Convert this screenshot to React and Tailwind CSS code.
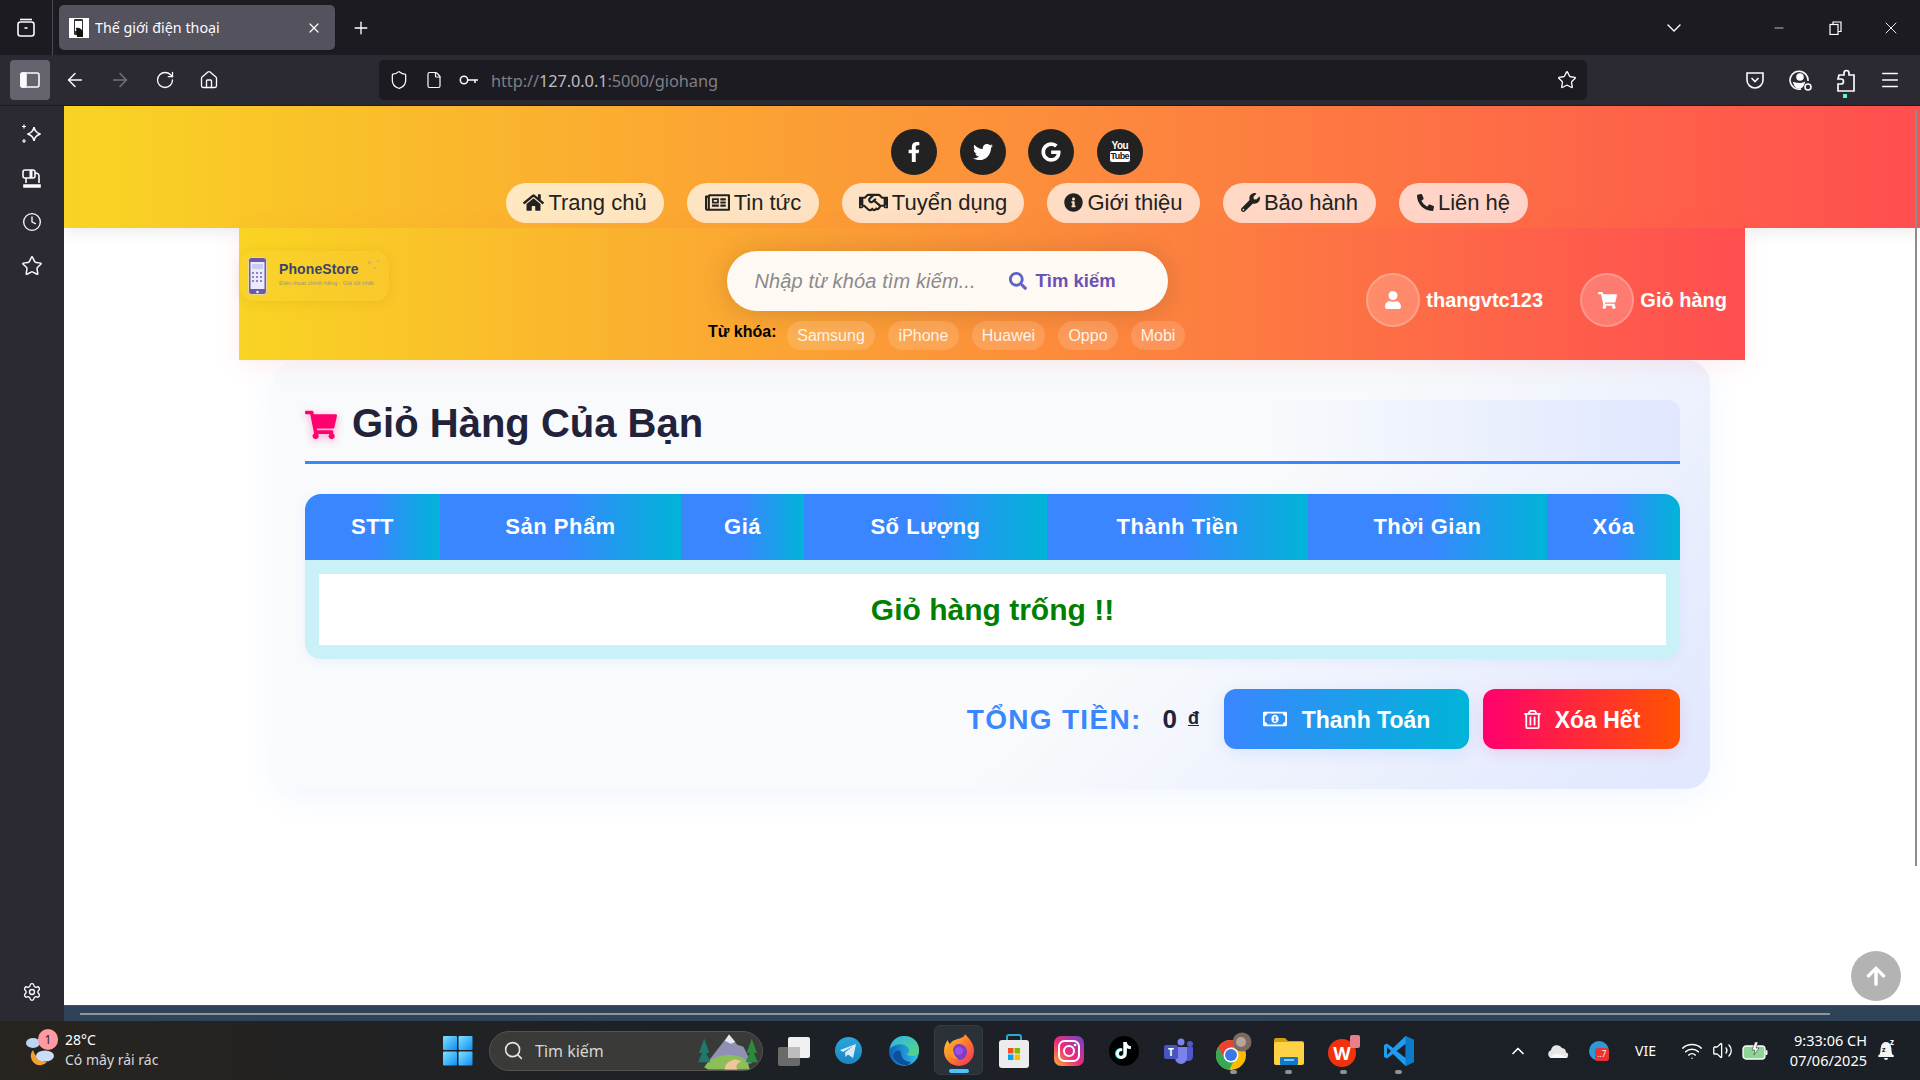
import React from "react";
import { FaHome, FaRegNewspaper, FaRegHandshake, FaInfoCircle, FaWrench, FaPhoneAlt, FaFacebookF, FaTwitter, FaGoogle, FaUser, FaShoppingCart, FaSearch, FaArrowUp, FaRegMoneyBillAlt, FaRegTrashAlt, FaTiktok } from "react-icons/fa";
import { ArrowLeft, ArrowRight, RotateCw, House, Shield, File, Star, Menu, ChevronDown, Minus, X, Plus, Clock, Settings, ChevronUp, Search, Wifi, Volume2 } from "lucide-react";

const nav = [
  [FaHome, "Trang chủ", "w-[158px]", "text-[21px]"],
  [FaRegNewspaper, "Tin tức", "w-[132px]", "text-[25px]"],
  [FaRegHandshake, "Tuyển dụng", "w-[182px]", "text-[29px]"],
  [FaInfoCircle, "Giới thiệu", "w-[153px]", "text-[19px]"],
  [FaWrench, "Bảo hành", "w-[153px]", "text-[19px]"],
  [FaPhoneAlt, "Liên hệ", "w-[129px]", "text-[17px]"],
];
const chips = [["Samsung", "w-[88px]"], ["iPhone", "w-[71px]"], ["Huawei", "w-[73px]"], ["Oppo", "w-[60px]"], ["Mobi", "w-[54px]"]];
const cols = [["STT", "w-[135px]"], ["Sản Phẩm", "w-[241px]"], ["Giá", "w-[123px]"], ["Số Lượng", "w-[243px]"], ["Thành Tiền", "w-[261px]"], ["Thời Gian", "w-[239px]"], ["Xóa", "w-[133px]"]];

function Social({ children }) {
  return <div className="w-[46px] h-[46px] rounded-full bg-[#222222] text-white flex items-center justify-center text-[20px]">{children}</div>;
}

function TabBar() {
  return (
    <div className="h-[55px] bg-[#1c1b22] flex items-center text-white shrink-0">
      <div className="w-[53px] h-full border-r border-[#4a4a50] flex items-center justify-center">
        <svg width="20" height="20" viewBox="0 0 20 20" fill="none" stroke="#fbfbfe" strokeWidth="1.6"><rect x="2" y="4" width="16" height="14" rx="2.5" /><path d="M4 1.5h12" /><path d="M8.5 10h3" /></svg>
      </div>
      <div className="ml-[6px] w-[276px] h-[45px] rounded-[5px] bg-[#53525d] flex items-center pl-[10px] pr-[13px] shadow-sm">
        <div className="w-[20px] h-[20px] bg-white flex items-center justify-center shrink-0">
          <svg width="14" height="18" viewBox="0 0 14 18"><rect x="2" y="0" width="9" height="16" rx="1" fill="#333" /><rect x="3" y="2" width="7" height="10" fill="#fff" /><path d="M4 9c3-1 6 1 7 4v5H5z" fill="#111" /></svg>
        </div>
        <span className="ml-[6px] text-[14.300px] text-[#fbfbfe] font-['Noto_Sans',sans-serif] flex-1 truncate">Thế giới điện thoại</span>
        <X size={16} strokeWidth={1.8} />
      </div>
      <Plus size={20} strokeWidth={1.6} className="ml-[16px]" />
      <div className="flex-1" />
      <ChevronDown size={24} strokeWidth={1.4} className="mr-[86px]" />
      <Minus size={14} strokeWidth={1.2} className="mr-[43px]" />
      <svg width="13" height="14" viewBox="0 0 13 14" fill="none" stroke="#fff" strokeWidth="1.2" className="mr-[39px]"><rect x="1" y="3.5" width="8" height="10" /><path d="M4 3.5V1h8v9.5H9" /></svg>
      <X size={20} strokeWidth={1.1} className="mr-[19px]" />
    </div>
  );
}

function ToolBar() {
  return (
    <div className="h-[51px] bg-[#2b2a33] flex items-start pt-[5px] text-[#fbfbfe] shrink-0 border-b border-[#1c1b22]">
      <div className="ml-[10px] w-[40px] h-[40px] rounded-[4px] bg-[#65646e] flex items-center justify-center">
        <svg width="20" height="16" viewBox="0 0 20 16" fill="none" stroke="#fbfbfe" strokeWidth="1.6"><rect x="1" y="1" width="18" height="14" rx="2" /><rect x="1" y="1" width="5" height="14" rx="1.5" fill="#fbfbfe" /></svg>
      </div>
      <div className="flex items-center h-[40px]">
        <ArrowLeft size={22} strokeWidth={1.6} className="ml-[14px]" />
        <ArrowRight size={22} strokeWidth={1.6} className="ml-[23px] text-[#75747b]" />
        <RotateCw size={20} strokeWidth={1.6} className="ml-[24px]" />
        <House size={20} strokeWidth={1.6} className="ml-[24px]" />
      </div>
      <div className="ml-[160px] w-[1208px] h-[40px] rounded-[5px] bg-[#1c1b22] flex items-center">
        <Shield size={20} strokeWidth={1.5} className="ml-[10px]" />
        <File size={18} strokeWidth={1.6} className="ml-[16px]" />
        <svg width="20" height="12" viewBox="0 0 20 12" fill="none" stroke="#fbfbfe" strokeWidth="1.5" className="ml-[16px]"><circle cx="5" cy="6" r="3.7" /><path d="M9 6h10M16 6v3" /></svg>
        <span className="ml-[12px] mt-[2px] text-[16.400px] text-[#7f7f85] font-['Noto_Sans',sans-serif] tracking-[-0.1px]">http://<span className="text-[#bdbdc1]">127.0.0.1</span>:5000/giohang</span>
        <div className="flex-1" />
        <Star size={20} strokeWidth={1.6} className="mr-[10px]" />
      </div>
      <div className="flex items-center h-[40px] relative">
        <svg width="20" height="20" viewBox="0 0 20 20" fill="none" stroke="#fbfbfe" strokeWidth="1.6" className="ml-[158px]"><path d="M2 3h16v7a8 8 0 0 1-16 0z" /><path d="M6.5 8l3.5 3.5L13.5 8" /></svg>
        <svg width="24" height="24" viewBox="0 0 24 24" fill="none" stroke="#fbfbfe" strokeWidth="1.6" className="ml-[24px]"><path d="M19 13A9 9 0 1 0 12 21" /><circle cx="11" cy="9" r="3" fill="#fbfbfe" /><path d="M5 15c4 1 8 1 10 0-1 3-3 5-5 5-2 0-4-2-5-5z" fill="#fbfbfe" /><circle cx="19" cy="19" r="3" /></svg>
        <svg width="22" height="24" viewBox="0 0 22 24" fill="none" stroke="#fbfbfe" strokeWidth="1.7" className="ml-[22px]"><path d="M4 7h5V5a2.5 2.5 0 0 1 5 0v2h5v16H3v-7h3a2.5 2.5 0 0 0 0-5H3z" /></svg>
        <Menu size={22} strokeWidth={1.6} className="ml-[22px]" />
        <div className="absolute left-[256px] top-[34px] w-[4px] h-[4px] bg-[#54ffbd]" />
      </div>
    </div>
  );
}

function SideBar() {
  return (
    <div className="w-[64px] h-full bg-[#2b2a33] flex flex-col items-center text-[#fbfbfe] pt-[17px] shrink-0">
      <svg width="22" height="22" viewBox="0 0 22 22" fill="none" stroke="#fbfbfe" strokeWidth="1.6"><path d="M13 4c.6 4 2.5 6 6.5 7-4 1-5.900 3-6.500 7-.6-4-2.500-6-6.500-7 4-1 5.900-3 6.500-7z" /><path d="M3 1.500v4M1 3.500h4M3 16v4M1 18h4" strokeWidth="1.200" /></svg>
      <svg width="20" height="20" viewBox="0 0 20 20" fill="none" stroke="#fbfbfe" strokeWidth="1.6" className="mt-[24px]"><rect x="1" y="1" width="12" height="8" rx="2" /><path d="M9 1v8" strokeWidth="3" /><path d="M13 4c3 0 4 1 4 3v7M4 9v5" /><path d="M2 16h16v2H2z" fill="#fbfbfe" /></svg>
      <Clock size={20} strokeWidth={1.6} className="mt-[23px]" />
      <Star size={22} strokeWidth={1.6} className="mt-[23px]" />
      <div className="flex-1" />
      <Settings size={20} strokeWidth={1.6} className="mb-[19px]" />
    </div>
  );
}

function PhoneLogo() {
  return (
    <svg width="19" height="38" viewBox="0 0 19 38" className="shrink-0">
      <rect x="0.500" y="0.500" width="18" height="37" rx="3" fill="#6c5aa8" stroke="#e8d9a8" />
      <rect x="2.500" y="5" width="14" height="27" fill="#eceafc" />
      <rect x="4" y="7" width="11" height="5" fill="#c9cbf1" />
      {[16, 20, 24].map((y) => [5, 9, 13].map((x) => <circle key={x + "-" + y} cx={x} cy={y} r="1.100" fill="#7c6cb8" />))}
      <circle cx="9.500" cy="35" r="1.200" fill="#fff" />
    </svg>
  );
}

function SubHeader() {
  return (
    <div className="mx-auto w-[1506px] h-[132px] flex items-start pl-px bg-[linear-gradient(90deg,#f9d423,#ff4e50)] shadow-[0_4px_24px_rgba(255,78,80,0.1)] relative z-10">
      <div className="mt-[23px] w-[149px] h-[50px] rounded-[14px] bg-[rgba(255,255,255,0.02)] shadow-[0_2px_12px_rgba(120,80,0,0.10)] flex items-center pl-[8px] relative">
        <PhoneLogo />
        <div className="ml-[12px] -mt-[5px] leading-none font-['Liberation_Sans',sans-serif]">
          <div className="text-[14px] font-bold text-[#3a4668] tracking-[0.1px] h-[15px]">PhoneStore</div>
          <div className="text-[6px] text-[#a09878] whitespace-nowrap mt-[3px]">Điện thoại chính hãng - Giá tốt nhất</div>
        </div>
        <div className="absolute left-[128px] top-[10px] w-[3px] h-[3px] rounded-full bg-[#c8b27a]" />
        <div className="absolute left-[137px] top-[9px] w-[2px] h-[2px] rounded-full bg-[#c8b27a]" />
        <div className="absolute left-[134px] top-[16px] w-[2px] h-[2px] rounded-full bg-[#c8b27a]" />
      </div>
      <div className="ml-[319px] w-[477px] mt-[23px] flex flex-col items-center">
        <div className="ml-[1px] w-[441px] h-[60px] rounded-[30px] bg-[#fff9f4] shadow-[0_2px_24px_rgba(80,60,30,0.22)] flex items-center pl-[28px]">
          <input readOnly placeholder="Nhập từ khóa tìm kiếm..." className="w-[236px] italic text-[20px] tracking-[0.12px] bg-transparent outline-none placeholder:text-[#8a8a8a] font-['Liberation_Sans',sans-serif]" />
          <FaSearch className="text-[#5f63c4] text-[18px] ml-[18px]" />
          <span className="ml-[9px] text-[18.500px] font-bold text-[#6a51b3]">Tìm kiếm</span>
        </div>
        <div className="w-full flex items-center mt-[10px]">
          <span className="text-[16px] font-bold text-black w-[79px] -mt-[7px]">Từ khóa:</span>
          <div className="flex gap-[13px]">
            {chips.map(([c, w]) => (
              <span key={c} className={"h-[29px] rounded-full bg-[rgba(255,255,255,0.15)] text-[16px] text-[#fff1e6] flex items-center justify-center " + w}>{c}</span>
            ))}
          </div>
        </div>
      </div>
      <div className="ml-auto mt-[45px] pr-[18px] flex items-center text-white font-bold text-[20px]">
        <div className="w-[54px] h-[54px] rounded-full bg-[rgba(255,255,255,0.2)] border-[2px] border-[rgba(255,255,255,0.22)] flex items-center justify-center text-[18px]"><FaUser /></div>
        <span className="ml-[6px] w-[116px]">thangvtc123</span>
        <div className="ml-[38px] w-[54px] h-[54px] rounded-full bg-[rgba(255,255,255,0.2)] border-[2px] border-[rgba(255,255,255,0.22)] flex items-center justify-center text-[19px]"><FaShoppingCart /></div>
        <span className="ml-[6px]">Giỏ hàng</span>
      </div>
    </div>
  );
}

function Cart() {
  return (
    <div className="ml-[209px] w-[1437px] h-[429px] rounded-[24px] bg-[linear-gradient(135deg,#f8fafc_60%,#e0e7ff_100%)] shadow-[0_8px_32px_rgba(58,134,255,0.08)] pl-[32px] pt-[40px]">
      <div className="w-[1375px] h-[64px] rounded-t-[12px] border-b-[3px] border-[#3a86ff] bg-[linear-gradient(90deg,#f8fafc_70%,#e0e7ff_100%)] flex items-start">
        <FaShoppingCart className="text-[#ff006e] text-[32px] drop-shadow-[0_2px_4px_rgba(255,0,110,0.35)] mt-[9px]" />
        <h1 className="ml-[15px] text-[40px] font-bold text-[#22223b] leading-none mt-[3px]">Giỏ Hàng Của Bạn</h1>
      </div>
      <div className="w-[1375px] mt-[30px] rounded-[16px] overflow-hidden shadow-[0_2px_12px_rgba(58,134,255,0.07)]">
        <table className="w-[1375px] table-fixed border-collapse">
          <thead>
            <tr className="h-[66px]">
              {cols.map(([c, w]) => (
                <th key={c} className={"text-white text-[22px] font-bold tracking-[0.5px] pb-[2px] bg-[linear-gradient(90deg,#3a86ff_50%,#00b4d8)] " + w}>{c}</th>
              ))}
            </tr>
          </thead>
          <tbody>
            <tr>
              <td colSpan={7} className="bg-[#caf0f8] p-[14px]">
                <div className="h-[71px] bg-white flex items-center justify-center text-[30px] font-bold text-[#008000]">Giỏ hàng trống !!</div>
              </td>
            </tr>
          </tbody>
        </table>
      </div>
      <div className="w-[1375px] mt-[30px] flex items-center justify-end">
        <span className="text-[28px] font-bold text-[#3a86ff] tracking-[1.300px] pt-[1px]">TỔNG TIỀN:</span>
        <span className="ml-[21px] text-[26px] font-bold text-[#22223b] pt-[1px]">0</span>
        <span className="ml-[11px] text-[18px] font-bold text-[#22223b] underline -mt-[3px] leading-none">đ</span>
        <button className="ml-[25px] w-[245px] h-[60px] rounded-[12px] bg-[linear-gradient(90deg,#3a86ff,#00b4d8)] text-white text-[23px] font-bold flex items-center justify-center gap-[15px] shadow-[0_4px_16px_rgba(58,134,255,0.12)]">
          <FaRegMoneyBillAlt className="text-[24px]" /><span className="pt-[2px]">Thanh Toán</span>
        </button>
        <button className="ml-[14px] w-[197px] h-[60px] rounded-[12px] bg-[linear-gradient(90deg,#ff006e,#ff5400)] text-white text-[23px] font-bold flex items-center justify-center gap-[13px] shadow-[0_4px_16px_rgba(255,0,110,0.12)]">
          <FaRegTrashAlt className="text-[19px]" /><span className="pt-[2px]">Xóa Hết</span>
        </button>
      </div>
    </div>
  );
}

function Page() {
  return (
    <div className="flex-1 min-w-0 h-full flex flex-col">
      <div className="flex-1 min-h-0 bg-white font-['Liberation_Sans',Arial,sans-serif] relative overflow-hidden">
        <div className="h-[122px] bg-[linear-gradient(90deg,#f9d423,#ff4e50)] shadow-[0_4px_16px_rgba(0,0,0,0.08)] pt-[23px] pl-[50px] flex flex-col items-center relative">
          <div className="flex gap-[22.500px]">
            <Social><FaFacebookF /></Social>
            <Social><FaTwitter /></Social>
            <Social><FaGoogle /></Social>
            <Social>
              <div className="flex flex-col items-center leading-none -mt-[1px]">
                <span className="text-[10px] font-bold tracking-[-0.6px] h-[10px]">You</span>
                <span className="text-[9px] h-[11px] font-bold bg-white text-[#222222] rounded-[2px] px-[1px] tracking-[-0.6px] flex items-center">Tube</span>
              </div>
            </Social>
          </div>
          <div className="flex gap-[23px] mt-[8px]">
            {nav.map(([I, t, w, s]) => (
              <a key={t} className={"h-[40px] pb-[2px] rounded-[20px] bg-[rgba(255,255,255,0.7)] text-[#222222] text-[22px] flex items-center justify-center gap-[4px] " + w}><I className={"shrink-0 " + s} /><span>{t}</span></a>
            ))}
          </div>
        </div>
        <SubHeader />
        <Cart />
        <div className="absolute right-[19px] top-[845px] w-[50px] h-[50px] rounded-full bg-[#b3b3b3] text-white flex items-center justify-center text-[22px]"><FaArrowUp /></div>
        <div className="absolute right-[3px] top-[4px] w-[2px] h-[756px] bg-[#8d8d8d]" />
      </div>
      <div className="h-[16px] bg-[#2f4358] flex items-center shrink-0 border-t border-[#3d5268]">
        <div className="ml-[16px] w-[1750px] h-[2px] bg-[#8f9499]" />
      </div>
    </div>
  );
}

function TIcon({ children, dot }) {
  return (
    <div className="w-[55px] h-[59px] flex items-center justify-center relative shrink-0">
      {children}
      {dot && <div className="absolute left-[24px] top-[49px] w-[7px] h-[4px] rounded-full bg-[#8e9195]" />}
    </div>
  );
}

function TaskBar() {
  return (
    <div className="h-[59px] shrink-0 flex items-center text-white font-['Noto_Sans',sans-serif] bg-[linear-gradient(90deg,#28241f,#1d2126_35%,#1b2026)] relative">
      <div className="w-[65px] h-full relative shrink-0">
        <svg width="34" height="36" viewBox="0 0 34 36" className="absolute left-[24px] top-[11px]">
          <ellipse cx="9" cy="11" rx="7" ry="5" fill="#bcd4f5" />
          <path d="M9 18a9 9 0 0 0 14 12c-6 0-12-5-14-12z" fill="#f0a030" />
          <ellipse cx="21" cy="24" rx="9" ry="5.500" fill="#cbdcf7" />
        </svg>
        <div className="absolute left-[38px] top-[8px] w-[20px] h-[21px] rounded-full bg-[#ff9aa2] text-[#3a1a1a] text-[12px] flex items-center justify-center">1</div>
      </div>
      <div className="w-[378px] text-[14px] leading-[20px] -mt-[2px]">
        <div>28°C</div>
        <div className="text-[#d8d8d8]">Có mây rải rác</div>
      </div>
      <svg width="30" height="30" viewBox="0 0 30 30" className="shrink-0">
        <defs><linearGradient id="wg" x1="0" y1="0" x2="1" y2="1"><stop offset="0" stopColor="#7fe3ff" /><stop offset="1" stopColor="#0f8cf5" /></linearGradient></defs>
        <rect x="0" y="0" width="14" height="14" rx="1" fill="url(#wg)" /><rect x="15.500" y="0" width="14" height="14" rx="1" fill="url(#wg)" /><rect x="0" y="15.500" width="14" height="14" rx="1" fill="url(#wg)" /><rect x="15.500" y="15.500" width="14" height="14" rx="1" fill="url(#wg)" />
      </svg>
      <div className="ml-[16px] w-[274px] h-[40px] rounded-full bg-[#3a3a38] border border-[#54534f] flex items-center pl-[13px] relative shrink-0">
        <Search size={21} strokeWidth={1.8} className="text-[#e4e4e4]" />
        <span className="ml-[11px] text-[16px] text-[#d6d6d6]">Tìm kiếm</span>
        <svg width="62" height="38" viewBox="0 0 60 36" className="absolute right-[2px] top-[0px]">
          <path d="M10 28L30 2l8 10 6 2 8 16z" fill="#8f90b4" /><path d="M26 8l4-6 6 7-4 2z" fill="#e8e8f4" />
          <path d="M6 34c6-14 32-16 42-6l2 8H10z" fill="#8cbf5a" /><path d="M26 36c0-6 4-8 10-10l6 2c-4 2-6 4-4 8z" fill="#f2c49a" />
          <path d="M6 6l5 14H8l4 9H0l4-9H1z" fill="#1f7a6a" /><path d="M52 6l5 14h-3l4 9H46l4-9h-3z" fill="#2c8a3c" />
        </svg>
      </div>
      <div className="ml-[3px] flex">
        <TIcon><svg width="38" height="30" viewBox="0 0 38 30"><rect x="3" y="11" width="22" height="19" rx="2" fill="#6a6a68" /><rect x="13" y="1" width="22" height="21" rx="2" fill="#f0f0f0" /><rect x="13" y="11" width="12" height="11" fill="#bdbdbd" /></svg></TIcon>
        <TIcon><svg width="27" height="27" viewBox="0 0 27 27"><defs><linearGradient id="tg" x1="0" y1="0" x2="0" y2="1"><stop offset="0" stopColor="#2aa6dd" /><stop offset="1" stopColor="#1c85c0" /></linearGradient></defs><circle cx="13.500" cy="13.500" r="13.500" fill="url(#tg)" /><path d="M5 13l16-6-3 14-5-3.500-2.500 2.500-.5-4.500 8-6.500-10 6z" fill="#d8ecf7" /></svg></TIcon>
        <TIcon><svg width="30" height="30" viewBox="0 0 30 30"><defs><linearGradient id="e1" x1="0" y1="0" x2="1" y2="0"><stop offset="0" stopColor="#0b63b8" /><stop offset="1" stopColor="#2ec3e6" /></linearGradient><linearGradient id="e2" x1="0" y1="0" x2="1" y2="1"><stop offset="0" stopColor="#2fb6e8" /><stop offset="1" stopColor="#59d67a" /></linearGradient></defs><circle cx="15" cy="15" r="15" fill="url(#e1)" /><path d="M1 13C2 5 8 0 15 0c9 0 15 6 15 14 0 4-3 6-7 6-3 0-5-1-5-2 2-1 3-3 2-5-2-4-8-6-13-4-3 1-5 2-6 4z" fill="url(#e2)" /><path d="M12 17c0 5 4 9 10 9l-3 3c-8 1-14-4-15-10 2-5 7-6 8-2z" fill="#0d4f9c" /></svg></TIcon>
        <div className="w-[49px] h-[50px] mx-[3px] mt-[4px] rounded-[6px] bg-[#2a3138] border border-[#343b42] flex items-center justify-center relative shrink-0">
          <svg width="30" height="32" viewBox="0 0 30 32"><defs><linearGradient id="f1" x1="0" y1="0" x2="1" y2="1"><stop offset="0" stopColor="#ffd43a" /><stop offset="0.5" stopColor="#ff7a2a" /><stop offset="1" stopColor="#f02a6a" /></linearGradient></defs><path d="M21 0c3 4 9 8 9 17a15 15 0 0 1-30 0c0-5 2-9 4-11 0 2 1 3 2 4 2-4 8-5 11-6 2-1 4-2 4-4z" fill="url(#f1)" /><circle cx="15" cy="18" r="8" fill="#7b3ccf" /><circle cx="15" cy="17" r="4" fill="#a14de0" /><path d="M3 16c3-7 9-9 14-7-4 0-7 3-8 6 0 4 2 8 6 11-6-1-11-4-12-10z" fill="#ff9a1f" /></svg>
          <div className="absolute left-[14px] bottom-[1px] w-[20px] h-[4px] rounded-full bg-[#4cc2ff]" />
        </div>
        <TIcon><svg width="30" height="34" viewBox="0 0 30 34"><path d="M8 7V3a2 2 0 0 1 2-2h10a2 2 0 0 1 2 2v4" fill="none" stroke="#27a8d8" strokeWidth="2" /><rect x="0" y="6" width="30" height="28" rx="3" fill="#ececec" /><rect x="9" y="14" width="5.500" height="5.500" fill="#f25022" /><rect x="15.500" y="14" width="5.500" height="5.500" fill="#7fba00" /><rect x="9" y="20.500" width="5.500" height="5.500" fill="#00a4ef" /><rect x="15.500" y="20.500" width="5.500" height="5.500" fill="#ffb900" /></svg></TIcon>
        <TIcon><svg width="30" height="30" viewBox="0 0 30 30"><defs><linearGradient id="ig" x1="0" y1="1" x2="1" y2="0"><stop offset="0" stopColor="#fdb42b" /><stop offset="0.45" stopColor="#ee2a7b" /><stop offset="1" stopColor="#6a47c8" /></linearGradient></defs><rect width="30" height="30" rx="7" fill="url(#ig)" /><rect x="5" y="5" width="20" height="20" rx="5.500" fill="none" stroke="#fff" strokeWidth="2" /><circle cx="15" cy="15" r="5" fill="none" stroke="#fff" strokeWidth="2" /><circle cx="21" cy="9" r="1.300" fill="#fff" /></svg></TIcon>
        <TIcon><div className="w-[30px] h-[30px] rounded-full bg-black flex items-center justify-center text-white text-[17px]"><FaTiktok className="drop-shadow-[-1px_0_0_#25f4ee]" /></div></TIcon>
        <TIcon><svg width="30" height="26" viewBox="0 0 30 26"><circle cx="17" cy="4" r="3.500" fill="#7b83eb" /><circle cx="26" cy="6" r="3" fill="#5059c9" /><path d="M20 9h9v9c0 3-2 5-5 5h-4z" fill="#5059c9" /><path d="M9 9h14v11a6 6 0 0 1-12 0z" fill="#7b83eb" /><rect x="0" y="7" width="14" height="14" rx="2" fill="#4b53bc" /><text x="7" y="18" fontSize="10" fill="#fff" fontWeight="700" textAnchor="middle">T</text></svg></TIcon>
        <TIcon dot><svg width="36" height="38" viewBox="0 0 36 38"><circle cx="15" cy="23" r="15" fill="#fbbc04" /><path d="M15 8a15 15 0 0 0-13 7.500l7 12 6-12h13A15 15 0 0 0 15 8z" fill="#ea4335" /><path d="M2 15.500A15 15 0 0 0 13 38l6-11H9z" fill="#34a853" /><circle cx="15" cy="23" r="7.500" fill="#fff" /><circle cx="15" cy="23" r="6" fill="#3b78e7" /><circle cx="26" cy="10" r="9.500" fill="#7c6a62" /><circle cx="25" cy="10" r="5" fill="#b9a49a" /></svg></TIcon>
        <TIcon dot><svg width="30" height="28" viewBox="0 0 30 28"><path d="M0 3a2 2 0 0 1 2-2h9l3 3h14a2 2 0 0 1 2 2v3H0z" fill="#d69e0a" /><rect x="0" y="5" width="30" height="23" rx="2" fill="#ffd246" /><rect x="6" y="20" width="18" height="8" rx="1" fill="#0f78c9" /><rect x="10" y="22" width="10" height="2" fill="#7fc7f2" /></svg></TIcon>
        <TIcon dot><svg width="32" height="32" viewBox="0 0 32 32"><circle cx="14" cy="18" r="14" fill="#f0320f" /><text x="14" y="25" fontSize="18" fill="#fff" fontWeight="700" textAnchor="middle">W</text><rect x="22" y="0" width="10" height="13" rx="2" fill="#e8808a" /></svg></TIcon>
        <TIcon dot><svg width="30" height="30" viewBox="0 0 30 30"><path d="M21.500 0L30 4v22l-8.500 4L9 18l-6 4.500L0 21V9l3-1.500L9 12z" fill="#1f9cf0" /><path d="M21.500 0L30 4v22l-8.500 4z" fill="#0a7acb" /><path d="M21.500 8L12.500 15l9 7z" fill="#1c2026" /><path d="M3 11l4 4-4 4z" fill="#1c2026" /></svg></TIcon>
      </div>
      <div className="flex-1" />
      <div className="flex items-center shrink-0">
        <ChevronUp size={20} strokeWidth={2} className="mr-[20px]" />
        <svg width="22" height="14" viewBox="0 0 22 14" className="mr-[19px]"><path d="M4 14a4 4 0 0 1-1-7.800A6 6 0 0 1 14 4a4.500 4.500 0 0 1 4 4.200A3 3 0 0 1 18 14z" fill="#e6e6e6" /><path d="M2 14c4-6 10-5 18 0z" fill="#f8f8f8" /></svg>
        <div className="w-[20px] h-[20px] rounded-full bg-[#2b9ad8] relative mr-[26px]"><div className="absolute left-[6px] top-[7px] w-[14px] h-[13px] rounded-[3px] bg-[#f0302c] text-[8px] leading-[12px] text-white text-center">..7</div></div>
        <span className="text-[14px] mr-[24px] w-[22px]">VIE</span>
        <Wifi size={22} strokeWidth={1.7} className="mr-[9px]" />
        <Volume2 size={21} strokeWidth={1.5} className="mr-[9px]" />
        <svg width="26" height="18" viewBox="0 0 26 18" className="mr-[11px]"><rect x="1" y="4" width="22" height="13" rx="3" fill="#8fd694" stroke="#fff" strokeWidth="1.300" /><rect x="23.500" y="8" width="2" height="5" rx="1" fill="#fff" /><path d="M13 0l-3 8h3l-1 5 5-7h-3l2-6z" fill="#fff" stroke="#1d2126" strokeWidth="0.500" /></svg>
        <div className="w-[88px] text-right text-[14.500px] leading-[20px] -mt-[1px] whitespace-nowrap"><div>9:33:06 CH</div><div>07/06/2025</div></div>
        <div className="ml-[10px] mr-[25px] w-[18px] h-[20px] relative">
          <svg width="18" height="20" viewBox="0 0 18 20"><path d="M2 14c2-2 1-5 2-8a5 5 0 0 1 10 0c1 3 0 6 2 8z" fill="#f4f4f4" /><rect x="1" y="14" width="16" height="2" rx="1" fill="#f4f4f4" /><path d="M7 17h4a2 2 0 0 1-4 0z" fill="#f4f4f4" /></svg>
          <span className="absolute left-[5px] top-[5px] text-[7px] leading-none font-bold text-[#1d2126]">z</span>
          <span className="absolute left-[13px] -top-[3px] text-[8px] leading-none font-bold text-white">z</span>
        </div>
      </div>
    </div>
  );
}

export default function App() {
  return (
    <div className="w-[1920px] h-[1080px] overflow-hidden flex flex-col bg-[#2b2a33]">
      <TabBar />
      <ToolBar />
      <div className="flex-1 min-h-0 flex">
        <SideBar />
        <Page />
      </div>
      <TaskBar />
    </div>
  );
}
